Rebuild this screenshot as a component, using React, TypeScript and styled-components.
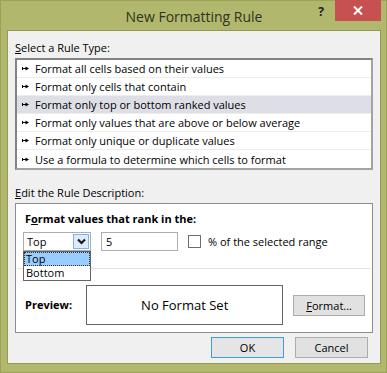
import styled, { createGlobalStyle } from 'styled-components'

const GlobalStyle = createGlobalStyle`
  html, body {
    margin: 0;
    padding: 0;
    background: #b1b86d;
  }
  body {
    font-family: "Open Sans", "Noto Sans", sans-serif;
    font-size: 11px;
    color: #000;
  }
`

const rules = [
    'Format all cells based on their values',
    'Format only cells that contain',
    'Format only top or bottom ranked values',
    'Format only values that are above or below average',
    'Format only unique or duplicate values',
    'Use a formula to determine which cells to format',
]

const Arrow = () => (
    <svg width="7" height="5" viewBox="0 0 7 5">
        <rect x="0" y="1" width="1" height="3" fill="#000" />
        <rect x="1" y="2" width="3" height="1" fill="#000" />
        <polygon points="3.5,0.5 7,2.5 3.5,4.5" fill="#000" />
    </svg>
)

const Chevron = () => (
    <svg width="9" height="7" viewBox="0 0 9 7">
        <path d="M1 1.5 L4.5 5 L8 1.5" fill="none" stroke="#1a1a1a" strokeWidth="2.2" />
    </svg>
)

export default function App() {
    return (
        <>
            <GlobalStyle />
            <Window>
                <TitleBar>
                    <Title>New Formatting Rule</Title>
                    <Controls>
                        <Help>?</Help>
                        <Close>
                            <svg width="10" height="9" viewBox="0 0 10 9">
                                <path d="M1 0.5 L9 8.5 M9 0.5 L1 8.5" stroke="#fff" strokeWidth="2" />
                            </svg>
                        </Close>
                    </Controls>
                </TitleBar>
                <Client>
                    <SectionLabel><u>S</u>elect a Rule Type:</SectionLabel>
                    <RuleList>
                        {rules.map((r, i) => (
                            <RuleRow key={r} $selected={i === 2} $last={i === rules.length - 1}>
                                <Arrow />
                                <span>{r}</span>
                            </RuleRow>
                        ))}
                    </RuleList>

                    <SectionLabel $top={15}><u>E</u>dit the Rule Description:</SectionLabel>
                    <GroupBox>
                        <BoldLabel>F<u>o</u>rmat values that rank in the:</BoldLabel>
                        <ControlRow>
                            <Combo>
                                <ComboText>Top</ComboText>
                                <ComboButton><Chevron /></ComboButton>
                                <DropList>
                                    <DropItem $active>Top</DropItem>
                                    <DropItem>Bottom</DropItem>
                                </DropList>
                            </Combo>
                            <NumberBox>5</NumberBox>
                            <CheckBox />
                            <CheckLabel>% of the selected ran<u>g</u>e</CheckLabel>
                        </ControlRow>
                        <Separator />
                        <PreviewRow>
                            <BoldLabel as="span">Preview:</BoldLabel>
                            <PreviewBox>No Format Set</PreviewBox>
                            <Button $width={73}><u>F</u>ormat...</Button>
                        </PreviewRow>
                    </GroupBox>

                    <ButtonRow>
                        <Button $width={73} $default>OK</Button>
                        <Button $width={73}>Cancel</Button>
                    </ButtonRow>
                </Client>
            </Window>
        </>
    )
}

const Window = styled.div`
  width: 387px;
  height: 373px;
  box-sizing: border-box;
  background: #b1b86d;
  border: 1px solid #9ca257;
  padding: 0 5px 8px 6px;
  display: flex;
  flex-direction: column;
`

const TitleBar = styled.div`
  position: relative;
  height: 29px;
  display: flex;
  align-items: center;
  justify-content: center;
`

const Title = styled.div`
  font-size: 14px;
  color: #2f3320;
  margin-top: 1px;
`

const Controls = styled.div`
  position: absolute;
  top: -1px;
  right: 0;
  display: flex;
  align-items: flex-start;
`

const Help = styled.div`
  font-weight: bold;
  font-size: 12px;
  color: #222;
  margin: 3px 11px 0 0;
`

const Close = styled.div`
  width: 46px;
  height: 21px;
  background: #c75050;
  display: flex;
  align-items: center;
  justify-content: center;
`

const Client = styled.div`
  flex: 1;
  background: #f0f0f0;
  border: 1px solid #949a55;
  padding: 9px 7px 0 7px;
  display: flex;
  flex-direction: column;
`

const SectionLabel = styled.div<{ $top?: number }>`
  line-height: 16px;
  margin-top: ${p => p.$top ?? 0}px;
  margin-bottom: 2px;
`

const RuleList = styled.div`
  border: 2px solid #838383;
  border-right-color: #a3a3a3;
  border-bottom-color: #a3a3a3;
  background: #fff;
  height: 108px;
`

const RuleRow = styled.div<{ $selected?: boolean; $last?: boolean }>`
  height: 18px;
  box-sizing: border-box;
  display: flex;
  align-items: center;
  gap: 6px;
  padding-left: 5px;
  background: ${p => (p.$selected ? '#dedee6' : '#fff')};
  border-bottom: ${p => (p.$last ? 'none' : '1px solid #ededed')};
  white-space: nowrap;
  span {
    line-height: 17px;
  }
`

const GroupBox = styled.div`
  border: 1px solid #898c95;
  background: #fff;
  height: 130px;
  box-sizing: border-box;
  padding: 7px 7px 0 7px;
  display: flex;
  flex-direction: column;
`

const BoldLabel = styled.div`
  font-weight: bold;
  line-height: 16px;
  margin-left: 2px;
`

const ControlRow = styled.div`
  display: flex;
  align-items: center;
  margin-top: 5px;
  height: 19px;
`

const Combo = styled.div`
  position: relative;
  width: 68px;
  height: 19px;
  box-sizing: border-box;
  border: 1px solid #abadb3;
  display: flex;
  align-items: center;
  justify-content: space-between;
  padding-right: 1px;
`

const ComboText = styled.span`
  padding-left: 3px;
`

const ComboButton = styled.div`
  width: 16px;
  height: 15px;
  box-sizing: border-box;
  background: #dcecfc;
  border: 1px solid #7eb4ea;
  display: flex;
  align-items: center;
  justify-content: center;
`

const DropList = styled.div`
  position: absolute;
  top: 18px;
  left: -1px;
  width: 68px;
  box-sizing: border-box;
  border: 1px solid #646464;
  background: #fff;
  z-index: 2;
`

const DropItem = styled.div<{ $active?: boolean }>`
  height: 14px;
  line-height: 14px;
  padding-left: 2px;
  box-sizing: border-box;
  overflow: hidden;
  background: ${p => (p.$active ? '#99ccff' : '#fff')};
  outline: ${p => (p.$active ? '1px dotted #333' : 'none')};
  outline-offset: -1px;
`

const NumberBox = styled.div`
  width: 77px;
  height: 19px;
  box-sizing: border-box;
  border: 1px solid #abadb3;
  margin-left: 10px;
  padding-left: 4px;
  line-height: 17px;
`

const CheckBox = styled.div`
  width: 13px;
  height: 13px;
  box-sizing: border-box;
  border: 1px solid #6d6d6d;
  background: #fff;
  margin-left: 10px;
`

const CheckLabel = styled.span`
  margin-left: 7px;
`

const Separator = styled.div`
  height: 1px;
  background: #e3e3e3;
  margin: 17px -6px 0 -6px;
`

const PreviewRow = styled.div`
  display: flex;
  align-items: center;
  margin-top: 16px;
`

const PreviewBox = styled.div`
  width: 201px;
  height: 40px;
  box-sizing: border-box;
  border: 1px solid #646464;
  margin-left: 14px;
  display: flex;
  align-items: center;
  justify-content: center;
  font-size: 13px;
`

const Button = styled.div<{ $width: number; $default?: boolean }>`
  width: ${p => p.$width}px;
  height: 21px;
  box-sizing: border-box;
  border: 1px solid ${p => (p.$default ? '#3c9cea' : '#adadad')};
  background: ${p => (p.$default ? '#e5e5e5' : '#e1e1e1')};
  display: flex;
  align-items: center;
  justify-content: center;
  margin-left: 10px;
`

const ButtonRow = styled.div`
  display: flex;
  justify-content: flex-end;
  gap: 1px;
  margin-top: 4px;
  padding-right: 5px;
`
